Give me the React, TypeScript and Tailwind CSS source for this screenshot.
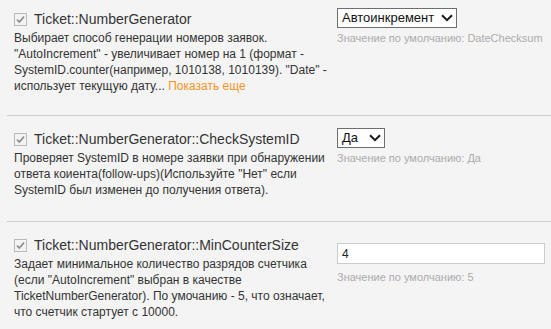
import React from 'react';

type Setting = {
  name: string;
  lines: React.ReactNode;
  control: React.ReactNode;
  hint: string;
  first?: boolean;
  last?: boolean;
};

const Check = () => (
  <span className="flex h-[13px] w-[13px] shrink-0 items-center justify-center border border-[#b9b9b9] bg-[#f3f3f3]">
    <svg width="11" height="11" viewBox="0 0 11 11">
      <path d="M2 5.6 L4.4 8 L9 2.6" fill="none" stroke="#8d8d8d" strokeWidth="1.7" />
    </svg>
  </span>
);

const Chevron = () => (
  <svg width="12" height="8" viewBox="0 0 12 8">
    <path d="M1 1.2 L6 6.2 L11 1.2" fill="none" stroke="#1a1a1a" strokeWidth="2" />
  </svg>
);

const FakeSelect = ({ value, width }: { value: string; width: string }) => (
  <div
    className={`flex h-[20px] items-center justify-between border border-[#6e6e6e] bg-white pl-[4px] pr-[3px] text-[13px] text-[#111] ${width}`}
  >
    <span>{value}</span>
    <Chevron />
  </div>
);

const Row = ({ name, lines, control, hint, first, last }: Setting) => (
  <li
    className={`flex pl-[7px] ${first ? 'pt-[8px]' : 'pt-[12px]'} ${
      last ? 'pb-[16px]' : 'border-b border-[#cfcfcf]'
    } ${first ? 'pb-[21px]' : !last ? 'pb-[23px]' : ''}`}
  >
    <div className="w-[320px] shrink-0 pt-[2px]">
      <label className="flex h-[18px] items-center gap-[7px] text-[14px] text-[#333]">
        <Check />
        <span>{name}</span>
      </label>
      <p className="mt-[2px] text-[12px] leading-[16px] text-[#333]">{lines}</p>
    </div>
    <div className="ml-[3px]">
      {control}
      <div className="text-[11px] leading-[14px] text-[#ababab]">{hint}</div>
    </div>
  </li>
);

export default function App() {
  return (
    <div className="h-[329px] w-[551px] overflow-hidden bg-[#f4f4f4] font-['Liberation_Sans',Arial,sans-serif]">
      <ul className="ml-[7px]">
        <Row
          first
          name="Ticket::NumberGenerator"
          lines={
            <>
              Выбирает способ генерации номеров заявок. "AutoIncrement" - увеличивает номер на 1 (формат -
              SystemID.counter(например, 1010138, 1010139). "Date" - использует текущую дату...{' '}
              <a className="text-[#f7941e]">Показать еще</a>
            </>
          }
          control={
            <div className="mb-[3px]">
              <FakeSelect value="Автоинкремент" width="w-[120px]" />
            </div>
          }
          hint="Значение по умолчанию: DateChecksum"
        />
        <Row
          name="Ticket::NumberGenerator::CheckSystemID"
          lines={
            <>
              Проверяет SystemID в номере заявки при обнаружении ответа коиента(follow-ups)(Используйте "Нет" если
              SystemID был изменен до получения ответа).
            </>
          }
          control={
            <div className="mb-[3px]">
              <FakeSelect value="Да" width="w-[48px]" />
            </div>
          }
          hint="Значение по умолчанию: Да"
        />
        <Row
          last
          name="Ticket::NumberGenerator::MinCounterSize"
          lines={
            <>
              Задает минимальное количество разрядов счетчика (если "AutoIncrement" выбран в качестве
              TicketNumberGenerator). По умочанию - 5, что означает, что счетчик стартует с 10000.
            </>
          }
          control={
            <div className="mb-[6px] mt-[9px] flex h-[21px] w-[208px] items-center border border-[#cccccc] bg-white pl-[4px] text-[12px] text-[#222]">
              4
            </div>
          }
          hint="Значение по умолчанию: 5"
        />
      </ul>
    </div>
  );
}
